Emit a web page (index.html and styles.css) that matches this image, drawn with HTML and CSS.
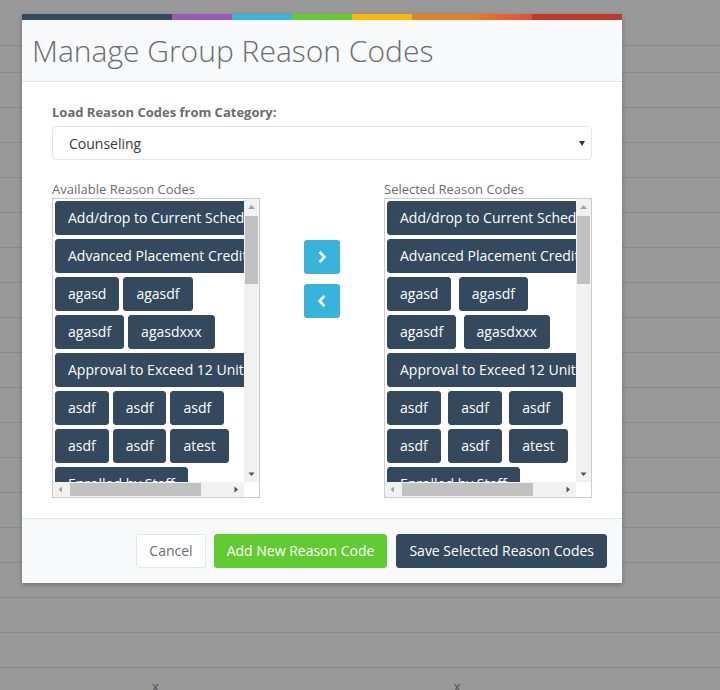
FILE: index.html
```html
<!DOCTYPE html>
<html>
<head>
<meta charset="utf-8">
<title>Manage Group Reason Codes</title>
<link rel="stylesheet" href="styles.css">
</head>
<body>
<div class="page">
  <div class="bg-row r1"></div>
  <div class="bg-row r2"></div>
  <div class="bg-row"></div><div class="bg-row"></div><div class="bg-row"></div><div class="bg-row"></div>
  <div class="bg-row"></div><div class="bg-row"></div><div class="bg-row"></div><div class="bg-row"></div>
  <div class="bg-row"></div><div class="bg-row"></div><div class="bg-row"></div><div class="bg-row"></div>
  <div class="bg-row"></div><div class="bg-row"></div><div class="bg-row"></div><div class="bg-row"></div>
  <div class="bg-row"></div>
  <div class="bg-row last"><span class="cell">x</span><span class="cell">x</span></div>
</div>

<div class="modal">
  <div class="color-line"></div>
  <div class="modal-header">
    <h4 class="modal-title">Manage Group Reason Codes</h4>
  </div>
  <div class="modal-body">
    <div class="form-group">
      <label class="field-label">Load Reason Codes from Category:</label>
      <div class="select"><span>Counseling</span><span class="caret"></span></div>
    </div>
    <div class="lists">
      <div class="col">
        <div class="list-label">Available Reason Codes</div>
        <div class="listbox">
          <div class="viewport avail"><span class="code">Add/drop to Current Schedule</span><span class="code">Advanced Placement Credit</span><span class="code">agasd</span><span class="code">agasdf</span><span class="code">agasdf</span><span class="code">agasdxxx</span><span class="code">Approval to Exceed 12 Units</span><span class="code">asdf</span><span class="code">asdf</span><span class="code">asdf</span><span class="code">asdf</span><span class="code">asdf</span><span class="code">atest</span><span class="code">Enrolled by Staff</span></div>
          <div class="vbar">
            <span class="sb-btn"><svg width="15" height="15" viewBox="0 0 15 15"><polygon points="4,10 11,10 7.5,6" fill="#a3a3a3"/></svg></span>
            <div class="vtrack"><div class="vthumb"></div></div>
            <span class="sb-btn"><svg width="15" height="15" viewBox="0 0 15 15"><polygon points="4.5,5.5 10.5,5.5 7.5,9" fill="#505050"/></svg></span>
          </div>
          <div class="hbar">
            <span class="sb-btn"><svg width="15" height="15" viewBox="0 0 15 15"><polygon points="9,4.5 9,10.5 5.5,7.5" fill="#a3a3a3"/></svg></span>
            <div class="htrack"><div class="hthumb"></div></div>
            <span class="sb-btn"><svg width="15" height="15" viewBox="0 0 15 15"><polygon points="5.5,4.5 5.5,10.5 9,7.5" fill="#505050"/></svg></span>
          </div>
          <div class="corner"></div>
        </div>
      </div>
      <div class="mid">
        <button class="arrow" type="button"><svg width="10" height="14" viewBox="0 0 10 14"><path d="M2.6 1.8 L7.4 7 L2.6 12.2" fill="none" stroke="#fff" stroke-width="2.6"/></svg></button>
        <button class="arrow" type="button"><svg width="10" height="14" viewBox="0 0 10 14"><path d="M7.4 1.8 L2.6 7 L7.4 12.2" fill="none" stroke="#fff" stroke-width="2.6"/></svg></button>
      </div>
      <div class="col">
        <div class="list-label">Selected Reason Codes</div>
        <div class="listbox">
          <div class="viewport sel">
            <span class="code">Add/drop to Current Schedule</span>
            <span class="code">Advanced Placement Credit</span>
            <span class="code">agasd</span>
            <span class="code">agasdf</span>
            <span class="code">agasdf</span>
            <span class="code">agasdxxx</span>
            <span class="code">Approval to Exceed 12 Units</span>
            <span class="code">asdf</span>
            <span class="code">asdf</span>
            <span class="code">asdf</span>
            <span class="code">asdf</span>
            <span class="code">asdf</span>
            <span class="code">atest</span>
            <span class="code">Enrolled by Staff</span>
          </div>
          <div class="vbar">
            <span class="sb-btn"><svg width="15" height="15" viewBox="0 0 15 15"><polygon points="4,10 11,10 7.5,6" fill="#a3a3a3"/></svg></span>
            <div class="vtrack"><div class="vthumb"></div></div>
            <span class="sb-btn"><svg width="15" height="15" viewBox="0 0 15 15"><polygon points="4.5,5.5 10.5,5.5 7.5,9" fill="#505050"/></svg></span>
          </div>
          <div class="hbar">
            <span class="sb-btn"><svg width="15" height="15" viewBox="0 0 15 15"><polygon points="9,4.5 9,10.5 5.5,7.5" fill="#a3a3a3"/></svg></span>
            <div class="htrack"><div class="hthumb"></div></div>
            <span class="sb-btn"><svg width="15" height="15" viewBox="0 0 15 15"><polygon points="5.5,4.5 5.5,10.5 9,7.5" fill="#505050"/></svg></span>
          </div>
          <div class="corner"></div>
        </div>
      </div>
    </div>
  </div>
  <div class="modal-footer">
    <button class="btn btn-default" type="button">Cancel</button>
    <button class="btn btn-success" type="button">Add New Reason Code</button>
    <button class="btn btn-primary" type="button">Save Selected Reason Codes</button>
  </div>
</div>
</body>
</html>
```
FILE: styles.css
```css
html, body {
  margin: 0;
  padding: 0;
}
body {
  background: #999999;
  font-family: "Open Sans", "DejaVu Sans", sans-serif;
  font-size: 13px;
  line-height: 1.42857;
  color: #6a6c6f;
  overflow: hidden;
  height: 690px;
}

/* background table behind the overlay */
.bg-row {
  height: 34px;
  border-bottom: 1px solid #8a8a8a;
}
.bg-row.r1 { height: 45px; }
.bg-row.r2 { height: 26px; }
.bg-row.last {
  border-bottom: 0;
  height: 22px;
  display: flex;
  gap: 295px;
  padding: 9px 0 0 152px;
}
.cell {
  color: #4b4e55;
  font-size: 13px;
}

/* modal */
.modal {
  position: absolute;
  left: 22px;
  top: 14px;
  width: 600px;
  background: #ffffff;
  box-shadow: 0 2px 5px rgba(0, 0, 0, 0.25);
}
.color-line {
  height: 6px;
  background-image: linear-gradient(to right,
    #34495e, #34495e 25%,
    #9b59b6 25%, #9b59b6 35%,
    #38b4dc 35%, #38b4dc 45%,
    #62cb31 45%, #62cb31 55%,
    #ffb606 55%, #ffb606 65%,
    #e67e22 65%, #e67e22 75%,
    #e74c3c 85%, #c0392b 85%, #c0392b 100%);
}
.modal-header {
  background: #f7f9fa;
  border-bottom: 1px solid #e4e5e7;
  padding: 14px 10px;
}
.modal-title {
  margin: 0;
  font-size: 30px;
  line-height: 33px;
  font-weight: 300;
  color: #6a6c6f;
}
.modal-body {
  padding: 21px 30px 20px;
}
.form-group {
  margin-bottom: 19px;
}
.field-label {
  display: block;
  font-weight: 700;
  line-height: 18px;
  margin-bottom: 5px;
}
.select {
  box-sizing: border-box;
  height: 34px;
  border: 1px solid #e4e5e7;
  border-radius: 4px;
  display: flex;
  align-items: center;
  justify-content: space-between;
  padding: 1px 6px 0 16px;
  font-size: 14px;
  line-height: 20px;
  color: #3a3a3a;
}
.caret {
  width: 0;
  height: 0;
  border-left: 3px solid transparent;
  border-right: 3px solid transparent;
  border-top: 5px solid #333333;
}

.lists {
  display: grid;
  grid-template-columns: 208px 1fr 208px;
}
.list-label {
  padding-top: 1px;
  line-height: 18px;
}
.listbox {
  box-sizing: border-box;
  height: 300px;
  border: 1px solid #cccccc;
  background: #ffffff;
  display: grid;
  grid-template-columns: 1fr 15px;
  grid-template-rows: 1fr 15px;
}
.viewport {
  overflow: hidden;
  min-width: 0;
  min-height: 0;
}
.avail {
  display: flex;
  flex-wrap: wrap;
  align-content: flex-start;
}
.code {
  display: inline-block;
  margin: 2px;
  padding: 6px 12px;
  border: 1px solid #34495e;
  border-radius: 3px;
  background: #34495e;
  color: #ffffff;
  font-size: 14px;
  line-height: 20px;
  white-space: nowrap;
}

/* drawn scrollbars */
.vbar {
  background: #f1f1f1;
  display: flex;
  flex-direction: column;
}
.hbar {
  background: #f1f1f1;
  display: flex;
}
.sb-btn {
  width: 15px;
  height: 15px;
  flex: none;
  display: block;
}
.sb-btn svg { display: block; }
.vtrack { flex: 1; }
.htrack { flex: 1; }
.vthumb {
  margin: 2px 1px 0;
  height: 68px;
  background: #c1c1c1;
}
.hthumb {
  margin: 1px 0 0 2px;
  width: 131px;
  height: 13px;
  background: #c1c1c1;
}
.corner { background: #ffffff; }

.mid {
  display: flex;
  flex-direction: column;
  align-items: center;
  gap: 10px;
  padding-top: 61px;
}
.arrow {
  width: 36px;
  height: 34px;
  padding: 0;
  border: 0;
  border-radius: 3px;
  background: #38b4dc;
  display: flex;
  align-items: center;
  justify-content: center;
}

.modal-footer {
  background: #f7f9fa;
  border-top: 1px solid #e4e5e7;
  padding: 15px;
  display: flex;
  justify-content: flex-end;
}
.btn {
  height: 34px;
  box-sizing: border-box;
  padding: 6px 12px;
  border: 1px solid transparent;
  border-radius: 3px;
  font-family: "Open Sans", "DejaVu Sans", sans-serif;
  font-size: 14px;
  line-height: 20px;
}
.btn-default {
  background: #ffffff;
  border-color: #e4e5e7;
  color: #6a6c6f;
}
.btn-success {
  background: #62cb31;
  border-color: #62cb31;
  color: #ffffff;
  margin-left: 8px;
}
.btn-primary {
  background: #34495e;
  border-color: #34495e;
  color: #ffffff;
  margin-left: 9px;
}
```
